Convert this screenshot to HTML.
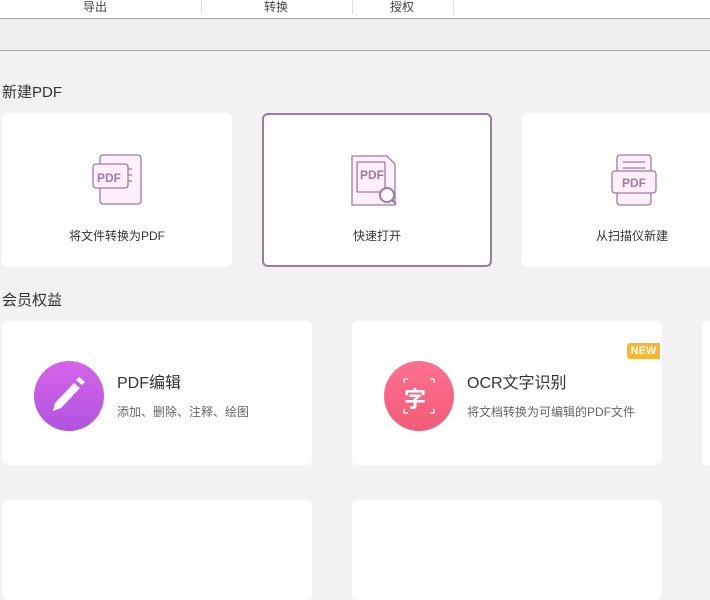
<!DOCTYPE html>
<html><head><meta charset="utf-8"><style>
body{margin:0;width:710px;height:503px;overflow:hidden;background:#f2f2f2;font-family:"Liberation Sans","Noto Sans CJK SC",sans-serif;position:relative;color:#333}
.a{position:absolute}
.tab{position:absolute;top:0;height:14px;font-size:12px;color:#444;text-align:center;line-height:14px}
.sep{position:absolute;top:0;width:1px;height:14px;background:#ddd}
.card{position:absolute;background:#fff;border-radius:6px}
.lbl{position:absolute;left:0;right:0;text-align:center;font-size:12px;color:#333}
.h{position:absolute;left:2px;font-size:15px;color:#333}
</style></head><body>
<div class="a" style="left:0;top:0;width:710px;height:18px;background:#fff;border-bottom:1px solid #aaa"></div>
<div class="tab" style="left:45px;width:100px">导出</div>
<div class="sep" style="left:201px"></div>
<div class="tab" style="left:226px;width:100px">转换</div>
<div class="sep" style="left:352px"></div>
<div class="tab" style="left:352px;width:100px">授权</div>
<div class="sep" style="left:453px"></div>
<div class="a" style="left:0;top:19px;width:710px;height:31px;background:#f0f0f0;border-bottom:1px solid #aaa"></div>
<div class="h" style="top:81px">新建PDF</div>
<div class="card" style="left:2px;top:113px;width:230px;height:154px">
<svg class="a" style="left:90px;top:40px" width="54" height="54" viewBox="0 0 54 54" fill="#fdf0fb" stroke="#a07aa0" stroke-width="1.3"><rect x="8" y="2" width="41" height="49" rx="3"/><rect x="1" y="11" width="35" height="24" rx="3"/><text x="5" y="29" font-size="12" font-weight="bold" fill="#a07aa0" stroke="none" font-family="Liberation Sans">PDF</text><path d="M36 16h4M36 22h4M36 28h4" fill="none"/></svg>
<div class="lbl" style="top:114px">将文件转换为PDF</div></div>
<div class="card" style="left:262px;top:113px;width:226px;height:150px;border:2px solid #9d7ba0">
<svg class="a" style="left:86px;top:39px" width="54" height="54" viewBox="0 0 54 54" fill="#fdf0fb" stroke="#a07aa0" stroke-width="1.3"><path d="M2 2h35l8 8v41H2z"/><rect x="7" y="8" width="28" height="30" rx="1"/><text x="10" y="25" font-size="12" font-weight="bold" fill="#a07aa0" stroke="none" font-family="Liberation Sans">PDF</text><circle cx="37" cy="41" r="7" fill="#fff" stroke-width="2"/><path d="M42 46l4 4" stroke-width="2"/></svg>
<div class="lbl" style="top:112px">快速打开</div></div>
<div class="card" style="left:522px;top:113px;width:230px;height:154px">
<svg class="a" style="left:88px;top:40px" width="54" height="54" viewBox="0 0 54 54" fill="#fdf0fb" stroke="#a07aa0" stroke-width="1.3"><rect x="7" y="2" width="34" height="50" rx="3"/><path d="M13 9h22M13 15h22" fill="none"/><rect x="2" y="18" width="44" height="22" rx="3"/><text x="12" y="34" font-size="12" font-weight="bold" fill="#a07aa0" stroke="none" font-family="Liberation Sans">PDF</text></svg>
<div class="lbl" style="top:114px;left:-10px">从扫描仪新建</div></div>
<div class="h" style="top:289px">会员权益</div>
<div class="card" style="left:2px;top:321px;width:310px;height:144px">
<div class="a" style="left:32px;top:40px;width:70px;height:70px;border-radius:50%;background:linear-gradient(#d664e8,#b054e0)"></div>
<svg class="a" style="left:32px;top:40px" width="70" height="70" viewBox="0 0 70 70"><path d="M19 50l2-8 19-20 6 5-19 20z" fill="#fff"/><path d="M42 19l3-3 6 5-3 3z" fill="#fff"/></svg>
<div class="a" style="left:115px;top:48px;font-size:16px;color:#333">PDF编辑</div>
<div class="a" style="left:115px;top:82px;font-size:12px;color:#666">添加、删除、注释、绘图</div></div>
<div class="card" style="left:352px;top:321px;width:310px;height:144px">
<div class="a" style="left:32px;top:40px;width:70px;height:70px;border-radius:50%;background:linear-gradient(#ff7090,#f05c78)"></div>
<svg class="a" style="left:32px;top:40px" width="70" height="70" viewBox="0 0 70 70" stroke="#fff" stroke-width="1.3" fill="none"><path d="M20 22v-4h4M46 18h4v4M20 48v4h4M46 52h4v-4"/></svg>
<div class="a" style="left:52px;top:61px;font-size:22px;font-weight:bold;color:#fff">字</div>
<div class="a" style="left:115px;top:48px;font-size:16px;color:#333">OCR文字识别</div>
<div class="a" style="left:115px;top:82px;font-size:12px;color:#666">将文档转换为可编辑的PDF文件</div>
<div class="a" style="left:275px;top:22px;width:33px;height:16px;background:#f7b530;border-radius:3px 0 0 3px;color:#fff;font-size:11px;font-weight:bold;text-align:center;line-height:16px">NEW</div></div>
<div class="card" style="left:702px;top:321px;width:310px;height:144px"></div>
<div class="card" style="left:2px;top:500px;width:310px;height:100px"></div>
<div class="card" style="left:352px;top:500px;width:310px;height:100px"></div>
</body></html>
